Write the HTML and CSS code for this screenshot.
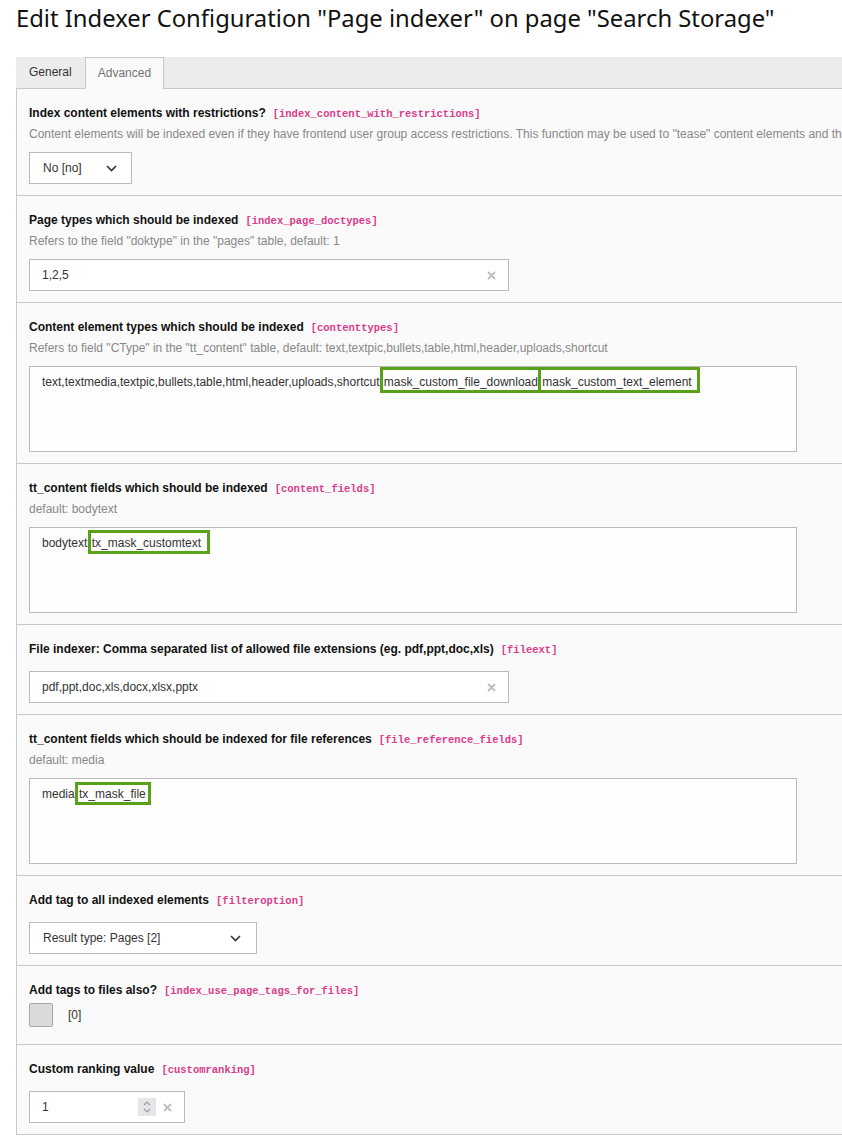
FILE: index.html
```html
<!DOCTYPE html>
<html>
<head>
<meta charset="utf-8">
<title>Edit Indexer Configuration</title>
<link rel="stylesheet" href="styles.css">
</head>
<body>
<div class="page">
  <h1 class="title">Edit Indexer Configuration "Page indexer" on page "Search Storage"</h1>

  <div class="tabs">
    <div class="tab">General</div>
    <div class="tab active">Advanced</div>
  </div>

  <div class="panel">
    <div class="field">
      <div class="label">Index content elements with restrictions?<code>[index_content_with_restrictions]</code></div>
      <div class="desc">Content elements will be indexed even if they have frontend user group access restrictions. This function may be used to "tease" content elements and then show a login form.</div>
      <div class="control select select-sm">
        <span>No [no]</span>
        <svg class="chev" width="11" height="7" viewBox="0 0 11 7"><path d="M1 1 L5.5 5.5 L10 1" fill="none" stroke="#333" stroke-width="1.6"/></svg>
      </div>
    </div>

    <div class="field">
      <div class="label">Page types which should be indexed<code>[index_page_doctypes]</code></div>
      <div class="desc">Refers to the field "doktype" in the "pages" table, default: 1</div>
      <div class="control input">
        <span>1,2,5</span>
        <svg class="clear" width="9" height="9" viewBox="0 0 9 9"><path d="M1 1 L8 8 M8 1 L1 8" stroke="#bdbdbd" stroke-width="1.8"/></svg>
      </div>
    </div>

    <div class="field">
      <div class="label">Content element types which should be indexed<code>[contenttypes]</code></div>
      <div class="desc">Refers to field "CType" in the "tt_content" table, default: text,textpic,bullets,table,html,header,uploads,shortcut</div>
      <div class="control textarea">text,textmedia,textpic,bullets,table,html,header,uploads,shortcut,<span class="hl hl-a">mask_custom_file_download</span>,<span class="hl hl-b">mask_custom_text_element</span></div>
    </div>

    <div class="field">
      <div class="label">tt_content fields which should be indexed<code>[content_fields]</code></div>
      <div class="desc">default: bodytext</div>
      <div class="control textarea">bodytext,<span class="hl hl-c">tx_mask_customtext</span></div>
    </div>

    <div class="field">
      <div class="label">File indexer: Comma separated list of allowed file extensions (eg. pdf,ppt,doc,xls)<code>[fileext]</code></div>
      <div class="control input">
        <span>pdf,ppt,doc,xls,docx,xlsx,pptx</span>
        <svg class="clear" width="9" height="9" viewBox="0 0 9 9"><path d="M1 1 L8 8 M8 1 L1 8" stroke="#bdbdbd" stroke-width="1.8"/></svg>
      </div>
    </div>

    <div class="field">
      <div class="label">tt_content fields which should be indexed for file references<code>[file_reference_fields]</code></div>
      <div class="desc">default: media</div>
      <div class="control textarea">media,<span class="hl hl-d">tx_mask_file</span></div>
    </div>

    <div class="field">
      <div class="label">Add tag to all indexed elements<code>[filteroption]</code></div>
      <div class="control select select-lg">
        <span>Result type: Pages [2]</span>
        <svg class="chev" width="11" height="7" viewBox="0 0 11 7"><path d="M1 1 L5.5 5.5 L10 1" fill="none" stroke="#333" stroke-width="1.6"/></svg>
      </div>
    </div>

    <div class="field">
      <div class="label">Add tags to files also?<code>[index_use_page_tags_for_files]</code></div>
      <div class="check-row">
        <span class="checkbox"></span>
        <span class="check-label">[0]</span>
      </div>
    </div>

    <div class="field">
      <div class="label">Custom ranking value<code>[customranking]</code></div>
      <div class="control input input-num">
        <span>1</span>
        <span class="spinner">
          <svg width="8" height="14" viewBox="0 0 8 14"><path d="M1 5 L4 2 L7 5 M1 9 L4 12 L7 9" fill="none" stroke="#9a9a9a" stroke-width="1.1"/></svg>
        </span>
        <svg class="clear" width="9" height="9" viewBox="0 0 9 9"><path d="M1 1 L8 8 M8 1 L1 8" stroke="#bdbdbd" stroke-width="1.8"/></svg>
      </div>
    </div>
  </div>
</div>
</body>
</html>
```

FILE: styles.css
```css
* { box-sizing: border-box; }

html, body {
  margin: 0;
  background: #fff;
}

body {
  font-family: "Liberation Sans", Arial, sans-serif;
  font-size: 12px;
  color: #333;
}

.page {
  padding-left: 16px;
  overflow: hidden;
}

.title {
  font-family: "Noto Sans", sans-serif;
  font-weight: 400;
  font-size: 23.8px;
  line-height: 36px;
  margin: 0;
  color: #111;
  white-space: nowrap;
}

.tabs {
  display: flex;
  margin-top: 21px;
  height: 32px;
  background: #ececec;
  border-bottom: 1px solid #c8c8c8;
}

.tab {
  padding: 0 13px;
  line-height: 31px;
  color: #333;
}

.tab.active {
  height: 32px;
  padding: 0 12px;
  margin-bottom: -1px;
  background: #fafafa;
  border: 1px solid #c8c8c8;
  border-bottom: none;
  color: #737373;
}

.panel {
  background: #fafafa;
  border-left: 1px solid #c8c8c8;
  border-bottom: 1px solid #c8c8c8;
}

.field {
  padding: 15px 12px 11px;
  border-bottom: 1px solid #c8c8c8;
}

.field:last-child {
  border-bottom: none;
}

.label {
  font-weight: bold;
  color: #111;
  height: 18px;
  line-height: 18px;
  white-space: nowrap;
}

.label code {
  font-family: "Liberation Mono", monospace;
  font-size: 10.5px;
  line-height: 10px;
  font-weight: bold;
  color: #dc3a8c;
  margin-left: 7px;
}

.desc {
  margin-top: 3px;
  line-height: 18px;
  color: #888;
  white-space: nowrap;
}

.control {
  margin-top: 9px;
}

.label + .control {
  margin-top: 13px;
}

.input,
.select {
  height: 32px;
  border: 1px solid #bbb;
  background: #fff;
  display: flex;
  align-items: center;
  color: #333;
}

.input {
  width: 480px;
  padding: 0 12px;
  justify-content: space-between;
}

.select {
  padding: 0 14px 0 13px;
  justify-content: space-between;
}

.select-sm { width: 103px; }
.select-lg { width: 228px; padding-right: 15px; }

.input-num {
  width: 156px;
  padding-right: 12px;
}

.input-num > span:first-child {
  flex: 1;
}

.spinner {
  width: 18px;
  height: 18px;
  background: #e6e6ea;
  display: flex;
  align-items: center;
  justify-content: center;
  margin-right: 7px;
}

.textarea {
  width: 768px;
  height: 86px;
  border: 1px solid #bbb;
  background: #fefefe;
  padding: 6px 12px;
  line-height: 18px;
  color: #333;
  white-space: nowrap;
}

.hl {
  outline: 3px solid #58a118;
  padding: 5px 3px 1px 1px;
}

.hl-a { padding-right: 0; }
.hl-b { padding-right: 5px; }
.hl-c { padding: 3px 6px 1px 1px; }
.hl-d { padding: 2px 2px 1px 1px; }

.check-row {
  display: flex;
  align-items: center;
  margin-top: 4px;
  margin-bottom: 6px;
}

.checkbox {
  width: 24px;
  height: 24px;
  background: #dadada;
  border: 1px solid #a8a8a8;
  border-radius: 2px;
}

.check-label {
  margin-left: 15px;
  color: #333;
}
```
